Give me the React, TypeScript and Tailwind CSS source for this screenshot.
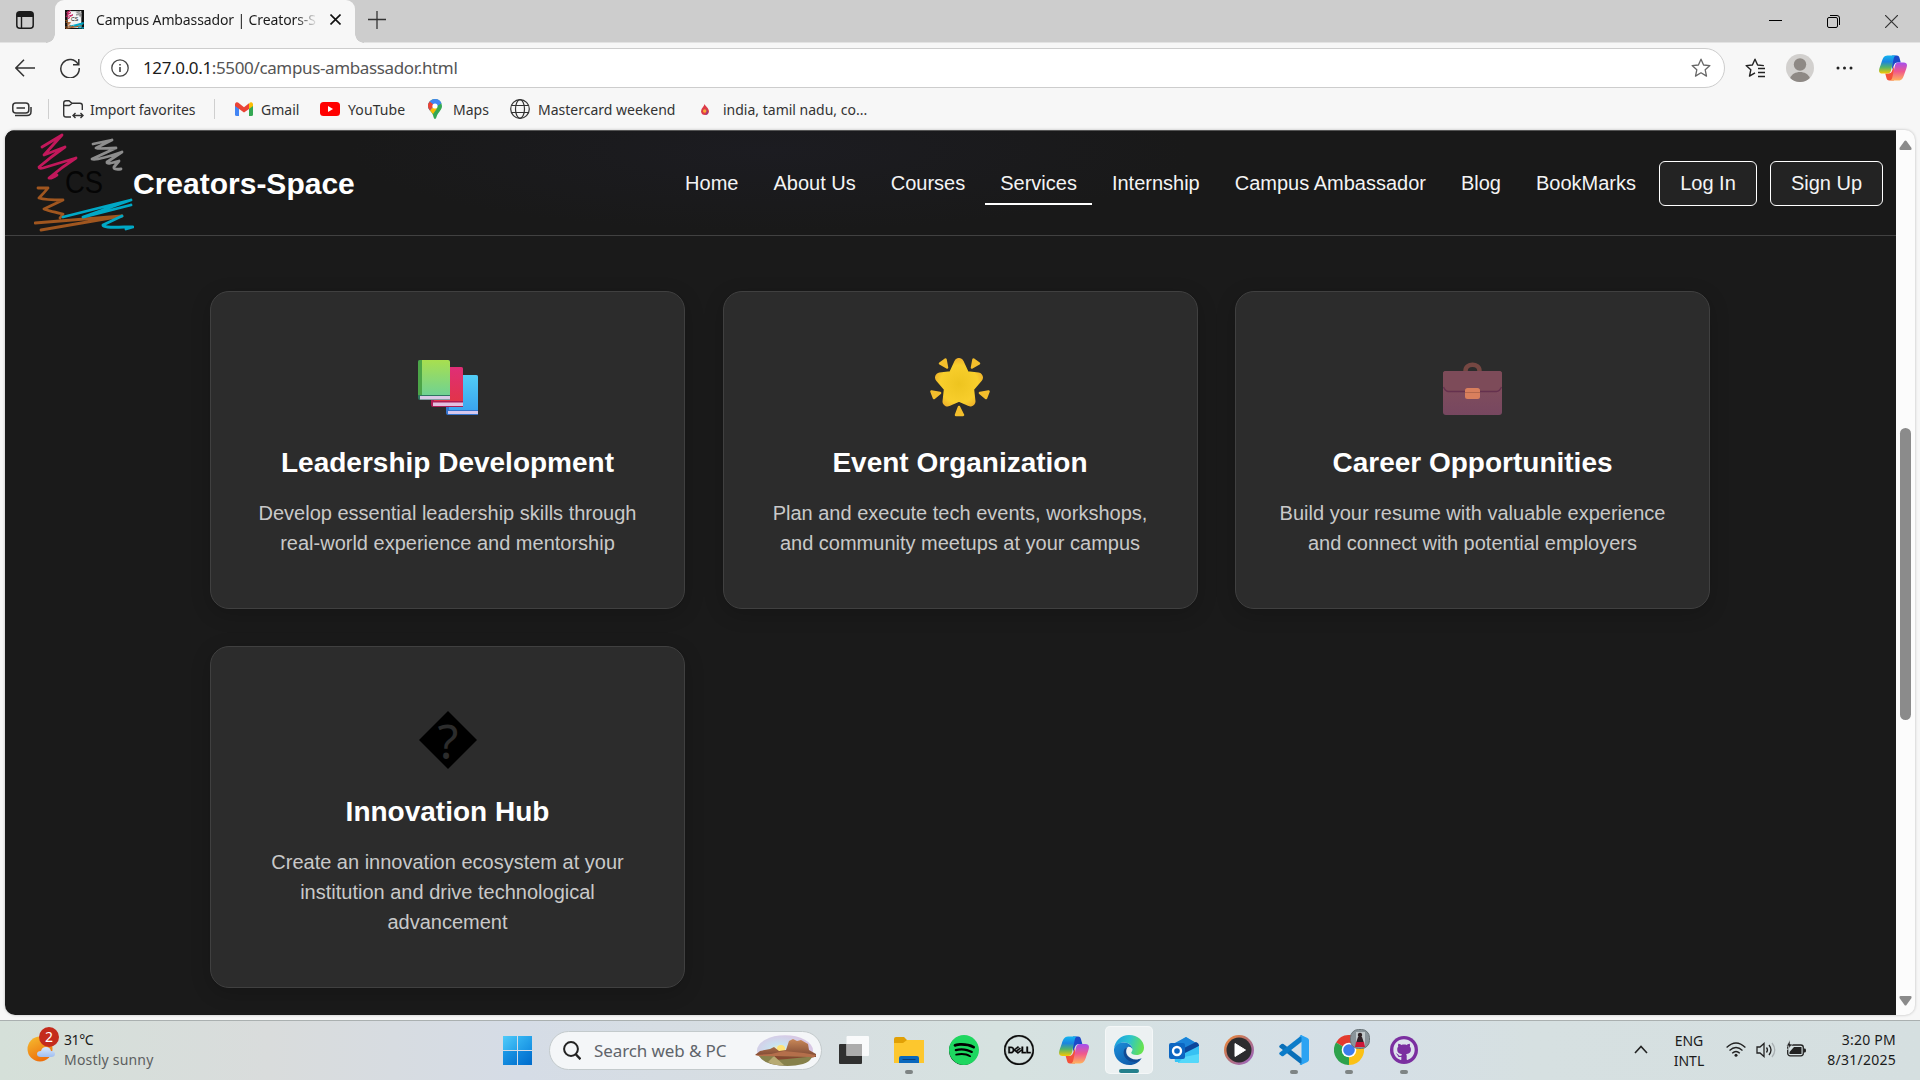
import React from "react";
import { SiDell, SiSpotify } from "react-icons/si";
import { FaGithub } from "react-icons/fa";

const ui = "font-['Noto_Sans','Open_Sans',sans-serif]";

function CopilotIcon({ size }: { size: number }) {
  return (
    <svg width={size} height={size} viewBox="0 0 30 30">
      <defs>
        <linearGradient id="cpA" x1="0" y1="0" x2="0" y2="1">
          <stop offset="0" stopColor="#12b5f0" />
          <stop offset=".35" stopColor="#1b84e0" />
          <stop offset=".65" stopColor="#53b36b" />
          <stop offset="1" stopColor="#f8c800" />
        </linearGradient>
        <linearGradient id="cpB" x1="0" y1="0" x2="0" y2="1">
          <stop offset="0" stopColor="#a34ff0" />
          <stop offset=".5" stopColor="#f0588c" />
          <stop offset="1" stopColor="#ffb45c" />
        </linearGradient>
      </defs>
      <path d="M14 1.500h5c2 0 2.600 1.200 3 2.700l1.300 4.800H20c-2.500 0-3.500 1.300-4.200 3.500L14 17z" fill="#1c49c9" />
      <path d="M16 28.500h-5c-2 0-2.600-1.200-3-2.700L6.700 21H10c2.500 0 3.500-1.300 4.200-3.500L16 13z" fill="#f4513a" />
      <path d="M17.500 1.500H9C5.500 1.500 4 4.500 2.800 8.500S0 15.500 0 18c0 2 1.500 3 3.500 3H9c2.200 0 3.200-1.200 4-3.500L15.700 5c.5-2 1-3.500 3-3.500z" fill="url(#cpA)" />
      <path d="M12.500 28.500H21c3.500 0 5-3 6.200-7S30 14.500 30 12c0-2-1.500-3-3.500-3H21c-2.200 0-3.200 1.200-4 3.500L14.300 25c-.5 2-1 3.500-3 3.500z" fill="url(#cpB)" />
    </svg>
  );
}

function Scribble({ dark = false, size }: { dark?: boolean; size: number }) {
  return (
    <svg width={size} height={size} viewBox="0 0 100 100" fill="none" strokeLinecap="round" strokeLinejoin="round">
      {dark && <rect width="100" height="100" fill="#111" />}
      {dark && <path d="M14 6h72v88H14z" fill="#f3f3f3" />}
      <g strokeWidth={dark ? 5 : 2.800}>
        <path d="M8 14 28 2Q20 11 10 22L31 14Q18 23 5 34q0 2 4 1L42 25Q28 34 15 45q2 1 8-3" stroke="#c2185b" />
        <path d="M59 11 78 7 62 15Q63 16 82 15L58 26Q62 28 88 19L73 29q-1 3 12-1L80 34q-1 3 7 2" stroke="#8d8d8d" />
        <path d="M4 55H14Q10 60 5 65q6 2 24 2L10 76q1 1 19 5l-3 4M1 90 88 83 7 97" stroke="#a0561f" />
        <path d="M29 84 97 67 49 84 97 72 50 84M88 83 69 92q-1 3 21 2h9l-7 2" stroke="#00a8c6" />
      </g>
      <text x="31" y="60" fontFamily="Liberation Sans" fontSize="32" textLength="38" lengthAdjust="spacingAndGlyphs" fill="#050505" stroke="none">CS</text>
    </svg>
  );
}

function Chrome() {
  return (
    <div className="relative size-[30px]">
      <svg width="30" height="30" viewBox="0 0 30 30">
        <path d="M15 15 2 7.500A15 15 0 0 1 28 7.500z" fill="#e33b2e" />
        <path d="M15 15 28 7.500A15 15 0 0 1 15 30z" fill="#fbc116" />
        <path d="M15 15v15A15 15 0 0 1 2 7.500z" fill="#2da24c" />
        <path d="m15 8h13l.6 3L22 17 14.500 30 21 18z" fill="#fbc116" />
        <path d="M2 7.500 8.900 18.500 15 22l-1.500 8z" fill="#2da24c" />
        <circle cx="15" cy="15" r="7.300" fill="#fff" />
        <circle cx="15" cy="15" r="5.800" fill="#3b7ded" />
      </svg>
      <svg className="absolute -top-[6px] left-[16px]" width="20" height="20" viewBox="0 0 20 20">
        <rect x=".5" y=".5" width="19" height="19" rx="8" fill="#89949a" stroke="#6a7478" />
        <path d="M6 3h9v15H6z" fill="#c0c8cb" />
        <circle cx="10" cy="6" r="2.200" fill="#2c2023" />
        <path d="M8 8h4l2 6H6z" fill="#302228" />
        <path d="M6 13h8l1 5H5z" fill="#cb1738" />
      </svg>
    </div>
  );
}

function Edge() {
  return (
    <svg width="30" height="30" viewBox="0 0 30 30">
      <defs>
        <linearGradient id="eg1" x1="0" y1=".2" x2="1" y2=".4">
          <stop offset="0" stopColor="#199ce0" />
          <stop offset=".5" stopColor="#2bc3cf" />
          <stop offset="1" stopColor="#67e34f" />
        </linearGradient>
        <linearGradient id="eg2" x1="0" y1="0" x2="1" y2="1">
          <stop offset="0" stopColor="#1b8fdb" />
          <stop offset="1" stopColor="#0c4f9e" />
        </linearGradient>
      </defs>
      <path d="M0 14C.6 6 7 0 15 0c9 0 15 6 15 12.500 0 5-3.500 7.500-7.500 7.500-3.500 0-5.300-1.200-5.300-2.200 0-.8 1.300-1.300 1.300-3.500 0-3.600-3.500-6.800-8.500-6.800C5 7.500 1.500 10 0 14z" fill="url(#eg1)" />
      <path d="M0 14C1.500 9.500 5 7.500 9.500 7.500c5.500 0 9 3.500 9 6.800-1-2-3-2.800-4.700-2.300C11 13 10 16 11 19.500c1.500 4.500 6 6.500 10.500 6 2.500-.3 4.500-1.300 6-2.300C25 27.500 20.500 30 15.500 30 7 30-.5 23.500 0 14z" fill="url(#eg2)" />
      <path d="M13.800 12C10 13 9 16.500 10 20c1.500 5 7 8 13 6.700l5-3.700c-6 3-12 1-14.500-2.500-2-3-1.500-6.500.3-8.500z" fill="#104b94" />
    </svg>
  );
}

function Vscode() {
  return (
    <svg width="30" height="30" viewBox="0 0 30 30">
      <path d="M.7 10.500 2.500 9q1-.7 2 0L23 23.500V30L.7 12.500q-1-1 0-2z" fill="#0a6fb8" />
      <path d="M.7 19.500 2.500 21q1 .7 2 0L23 6.500V0L.7 17.500q-1 1 0 2z" fill="#0b7cc9" />
      <path d="m22 0 6.500 3Q30 3.700 30 5.300v19.400q0 1.600-1.500 2.300L22 30q-1 0-1.500-1 1.500.3 2-1V2.500q-.5-1.500-2-1Q21 0 22 0z" fill="#2ba3f3" />
    </svg>
  );
}

function Outlook() {
  return (
    <svg width="30" height="28" viewBox="0 0 30 28">
      <path d="M4 9 17 1l13 8v17H6z" fill="#38c5f5" />
      <path d="M4 8 17 1l12 7-14 9z" fill="#1b83d8" />
      <path d="M13 13 27 6q3 1 3 4L14 21z" fill="#0b469b" />
      <path d="m14 18 16-8v15q0 2-2 2H9z" fill="#36c1f3" />
      <path d="m9 27 6-6 15-3v7q0 2-2 2z" fill="#54d8fa" />
      <rect y="7" width="16" height="16" rx="2" fill="#0c66c2" />
      <circle cx="8" cy="15" r="4" fill="none" stroke="#fff" strokeWidth="2.400" />
    </svg>
  );
}

function TaskCell({ children, dot, active }: { children: React.ReactNode; dot?: boolean; active?: boolean }) {
  return (
    <div className="flex w-[55px] justify-center pt-[5px]">
      <div className={active ? "relative flex h-12 w-12 items-center justify-center rounded-[5px] border border-white/40 bg-white/55" : "relative flex h-12 w-12 items-center justify-center"}>
        {children}
        {dot && <span className="absolute bottom-0 left-5 h-1 w-2 rounded-full bg-[#7e8484]" />}
        {active && <span className="absolute bottom-0 left-[13px] h-1 w-5 rounded-full bg-[#24808c]" />}
      </div>
    </div>
  );
}

function Books() {
  return (
    <svg width="60" height="56" viewBox="0 0 60 56">
      <defs>
        <linearGradient id="bkG" x1="0" y1="0" x2="0" y2="1"><stop stopColor="#a8df4f" /><stop offset="1" stopColor="#70d292" /></linearGradient>
        <linearGradient id="bkR" x1="0" y1="0" x2="0" y2="1"><stop stopColor="#df2e77" /><stop offset="1" stopColor="#e23449" /></linearGradient>
        <linearGradient id="bkB" x1="0" y1="0" x2="0" y2="1"><stop stopColor="#52cdf5" /><stop offset="1" stopColor="#3aa5f0" /></linearGradient>
      </defs>
      <path d="M28 17q0-2 2-2h28q2 0 2 2v38H30q-2 0-2-2z" fill="#3474cd" />
      <path d="M31 15h27q2 0 2 2v33H31z" fill="url(#bkB)" />
      <path d="M30 51h30v3H30z" fill="#d5c8ef" />
      <path d="M13 10q0-3 3-3h27q2 0 2 2v38H15q-2 0-2-2z" fill="#ac1d54" />
      <path d="M16 7h27q2 0 2 2v32H16z" fill="url(#bkR)" />
      <path d="M15 42.500h30V46H15z" fill="#e3bfdf" />
      <path d="M0 2q0-2 2-2h28q2 0 2 2v38H2q-2 0-2-2z" fill="#2e7560" />
      <path d="M0 2q0-2 2-2h3v35H0z" fill="#4ca548" />
      <path d="M4 0h26q2 0 2 2v33H4z" fill="url(#bkG)" />
      <path d="M2 36h30v3.500H2z" fill="#d9c9e5" />
    </svg>
  );
}

function GlowStar() {
  return (
    <svg width="60" height="59" viewBox="0 0 60 59" strokeLinejoin="round">
      <defs>
        <radialGradient id="st" gradientUnits="userSpaceOnUse" cx="29" cy="26" r="27"><stop stopColor="#eec41f" /><stop offset=".7" stopColor="#f8ce2c" /><stop offset="1" stopColor="#ecab2a" /></radialGradient>
      </defs>
      <path d="m29 5 6 13 13 1.500-9 10.500 1.500 13.500L29 38.500l-11.500 5L19 30l-9-10.500L23 18z" fill="url(#st)" stroke="url(#st)" strokeWidth="10" />
      <g fill="#f3be2c" stroke="#f3be2c" strokeWidth="2.500">
        <path d="m10 5.500 5.500-4 1.500 8zM49 5.500l-5.500-4-1.500 8zM1.500 33.500 10 35l-6 5zM58.500 33.500 50 35l6 5zM26 57l3-8 4 8z" />
      </g>
    </svg>
  );
}

function Briefcase() {
  return (
    <svg width="60" height="53" viewBox="0 0 60 53">
      <defs>
        <linearGradient id="bf" x1="0" y1="0" x2="0" y2="1"><stop stopColor="#84505a" /><stop offset="1" stopColor="#774760" /></linearGradient>
      </defs>
      <path d="M22.500 9c0-8.500 14-8.500 14 0" fill="none" stroke="#754742" strokeWidth="4.500" />
      <rect x="0" y="9" width="59" height="44" rx="3" fill="url(#bf)" />
      <path d="M0 12q0-3 3-3h53q3 0 3 3v13q-2 4-5 4H5q-3 0-5-4z" fill="#7d4b59" />
      <path d="M.5 25q2 4.500 5 4.500h48q3 0 5-4.500" fill="none" stroke="#65314e" strokeWidth="1.300" />
      <rect x="22" y="26" width="15" height="11" rx="2.500" fill="#d97f5d" />
      <path d="M22 30.500h15" stroke="#b5674c" />
    </svg>
  );
}

function Unknown() {
  return (
    <div className="relative size-[58px]">
      <svg width="58" height="58" viewBox="0 0 58 58">
        <path d="M29 0 58 29 29 58 0 29z" fill="#000" />
      </svg>
      <span className="absolute -top-[4px] left-0 w-[59px] text-center font-['Noto_Sans'] text-[48px] leading-[68px] text-[#2c2c2c]">?</span>
    </div>
  );
}

type CardProps = { icon: React.ReactNode; title: string; lines: string[]; iconBox: string };

function Card({ icon, title, lines, iconBox }: CardProps) {
  return (
    <article className="flex flex-col items-center rounded-[19px] border border-[#404040] bg-[#2c2c2c] py-[50px] shadow-[0_5px_20px_rgba(0,0,0,0.18)]">
      <div className={iconBox}>{icon}</div>
      <h3 className="text-[28px] leading-8 font-bold text-white">{title}</h3>
      <p className="mt-[19px] text-center text-[20px] leading-[30px] text-[#c9c9c9]">
        {lines.map((l) => (
          <span key={l} className="block whitespace-nowrap">{l}</span>
        ))}
      </p>
    </article>
  );
}

const navItems = ["Home", "About Us", "Courses", "Services", "Internship", "Campus Ambassador", "Blog", "BookMarks"];

function TitleBar() {
  return (
    <div className="flex h-[43px] border-b border-[#e3e3e3] bg-[#cdcdcd]">
      <div className="flex w-[55px] justify-center rounded-br-[10px] pt-[11px] pr-[5px]">
        <svg width="18" height="18" viewBox="0 0 18 18">
          <rect x=".8" y=".8" width="16.400" height="16.400" rx="3" fill="none" stroke="#1b1b1b" strokeWidth="1.500" />
          <path d="M1 3q0-2 2-2h12q2 0 2 2v3H1z" fill="#1b1b1b" />
          <path d="M5.500 5v12" stroke="#1b1b1b" strokeWidth="1.400" />
        </svg>
      </div>
      <div className="relative flex h-[43px] w-[300px] items-center rounded-t-[9px] bg-[#f7f7f7] pr-[14px] pb-[4px] pl-[10px]">
        <span className="absolute bottom-0 -left-[9px] size-[9px] bg-[radial-gradient(circle_at_0_0,#cdcdcd_8.5px,#f7f7f7_9px)]" />
        <span className="absolute -right-[9px] bottom-0 size-[9px] bg-[radial-gradient(circle_at_100%_0,#cdcdcd_8.5px,#f7f7f7_9px)]" />
        <Scribble dark size={19} />
        <span className="ml-3 w-[222px] bg-linear-to-r from-[#1b1b1b] from-90% to-transparent bg-clip-text text-[14px] tracking-[-0.12px] whitespace-nowrap text-transparent">
          Campus Ambassador | Creators-S
        </span>
        <svg className="ml-auto shrink-0" width="11" height="11" viewBox="0 0 11 11"><path d="m.5.5 10 10M10.500.5l-10 10" stroke="#111" strokeWidth="1.600" /></svg>
      </div>
      <svg className="mt-[11px] ml-[13px]" width="18" height="18" viewBox="0 0 18 18"><path d="M9 0v18M0 8.500h18" stroke="#333" strokeWidth="1.300" /></svg>
      <div className="ml-auto flex gap-[45px] pt-[15px] pr-[22px]">
        <svg width="13" height="13" viewBox="0 0 13 13"><path d="M0 5.500h13" stroke="#000" /></svg>
        <svg width="13" height="13" viewBox="0 0 13 13" fill="none" stroke="#000"><rect x=".5" y="2.500" width="10" height="10" rx="1.500" /><path d="M3 .5h7q2.500 0 2.500 2.500v7" /></svg>
        <svg width="13" height="13" viewBox="0 0 13 13"><path d="m0 0 13 13M13 0 0 13" stroke="#333" strokeWidth="1.200" /></svg>
      </div>
    </div>
  );
}

const starPath = "M10 1.200 12.600 7l6.300.6-4.700 4.200 1.300 6.300-5.500-3.300-5.500 3.300 1.300-6.300L1.100 7.600 7.400 7z";

function Toolbar() {
  return (
    <div className="flex h-12 items-center pt-[2px]">
      <svg className="ml-[15px]" width="20" height="18" viewBox="0 0 20 18" fill="none" stroke="#333" strokeWidth="1.500"><path d="M9 .7.900 9 9 17.300M1 9h19" /></svg>
      <svg className="ml-[25px]" width="20" height="20" viewBox="0 0 20 20" fill="none" stroke="#333" strokeWidth="1.500"><path d="M18.200 6.500A9.200 9.200 0 1 0 19.200 10M18.800 1v5.800H13" /></svg>
      <div className="ml-5 flex h-10 w-[1625px] items-center rounded-full border border-[#cdcdcd] bg-white pr-[13px] pl-[10px]">
        <svg width="18" height="18" viewBox="0 0 18 18" fill="none" stroke="#444" strokeWidth="1.300"><circle cx="9" cy="9" r="8.200" /><path d="M9 8v5M9 5v1.500" strokeWidth="1.600" /></svg>
        <span className="ml-[14px] text-[17px] tracking-[-0.36px] text-[#555]"><span className="text-[#1b1b1b]">127.0.0.1</span>:5500/campus-ambassador.html</span>
        <svg className="ml-auto" width="20" height="20" viewBox="0 0 20 20" fill="none" stroke="#666" strokeWidth="1.300" strokeLinejoin="round"><path d={starPath} /></svg>
      </div>
      <svg className="ml-5" width="20" height="20" viewBox="0 0 20 20" fill="none" stroke="#222" strokeWidth="1.400" strokeLinejoin="round"><path d="m10 14.800-5.500 3.300 1.300-6.300L1.100 7.600 7.400 7 10 1.200 12.600 7l6.300.6" /><path d="M13 10.500h7M13 14.500h7M13 18.500h7" strokeWidth="1.500" /></svg>
      <svg className="ml-[21px]" width="28" height="28" viewBox="0 0 28 28"><circle cx="14" cy="14" r="14" fill="#d2d0ce" /><circle cx="14" cy="10.500" r="6.200" fill="#8e8985" /><path d="M4.200 24C7 16 21 16 23.800 24A14 14 0 0 1 4.200 24z" fill="#8e8985" /></svg>
      <svg className="ml-[22px]" width="18" height="4" viewBox="0 0 18 4" fill="#222"><circle cx="2" cy="2" r="1.500" /><circle cx="8.500" cy="2" r="1.500" /><circle cx="15" cy="2" r="1.500" /></svg>
      <div className="ml-[25px]"><CopilotIcon size={28} /></div>
    </div>
  );
}

function Favorites() {
  return (
    <div className="flex h-[39px] items-center pb-[3px] text-[14px] text-[#333]">
      <svg className="ml-3" width="20" height="15" viewBox="0 0 20 15" fill="none" stroke="#333" strokeWidth="1.500"><rect x=".8" y="1" width="16" height="10" rx="3" /><path d="M4.500 6h8.500M3 13.500h12q4 0 4-4V5" /></svg>
      <span className="ml-4 h-5 w-px bg-[#cfcfcf]" />
      <svg className="ml-[14px]" width="21" height="19" viewBox="0 0 21 19" fill="none" stroke="#333" strokeWidth="1.400"><path d="M8 17H3q-2.300 0-2.300-2.300V3Q.7.700 3 .7h3l3 2.600h8q2.300 0 2.300 2.300V10M.7 5.500h5.500l3-2.200M10 15.500h10M12.500 13 10 15.500l2.500 2.500M17.500 13l2.500 2.500-2.500 2.500" /></svg>
      <span className="ml-[6px] w-[106px] tracking-[-0.08px] whitespace-nowrap">Import favorites</span>
      <span className="ml-[18px] h-5 w-px bg-[#cfcfcf]" />
      <svg className="ml-5" width="18" height="14" viewBox="0 0 18 14"><path d="M0 2v10.500Q0 14 1.500 14H4V5z" fill="#4285f4" /><path d="M18 2v10.500q0 1.500-1.500 1.500H14V5z" fill="#34a853" /><path d="M14 1.500Q15 0 16.500.2 18 .5 18 2.500V4l-4 3z" fill="#fbbc04" /><path d="M0 2.500Q0 .5 1.500.2 3 0 4 1.200l5 4 5-4V7L9 10.500 0 4z" fill="#ea4335" /></svg>
      <span className="ml-2 w-[38px]">Gmail</span>
      <svg className="ml-[21px]" width="20" height="14" viewBox="0 0 20 14"><rect width="20" height="14" rx="3.500" fill="#f00" /><path d="m8 4 5 3-5 3z" fill="#fff" /></svg>
      <span className="ml-2 w-[58px] tracking-[0.1px]">YouTube</span>
      <svg className="ml-[22px]" width="14" height="20" viewBox="0 0 14 20"><path d="M7 0a7 7 0 0 1 7 7c0 4-4 6-5.500 11q-.5 2-1.500 2t-1.500-2C5 13 0 11 0 7a7 7 0 0 1 7-7z" fill="#34a853" /><path d="M7 0a7 7 0 0 1 6.500 4.300L2 11.500C.5 10 0 8 0 7a7 7 0 0 1 7-7z" fill="#4285f4" /><path d="M1.600 2.500 6 6l-4 5.500C.5 10 0 8 0 7q0-2.600 1.600-4.500z" fill="#ea4335" /><path d="m2 11.500 3.500-4 3.500 2L5 15z" fill="#fbbc04" /><circle cx="7" cy="7" r="2.600" fill="#fff" /></svg>
      <span className="ml-[11px] w-[37px]">Maps</span>
      <svg className="ml-5" width="20" height="20" viewBox="0 0 20 20" fill="none" stroke="#333" strokeWidth="1.200"><circle cx="10" cy="10" r="9.300" /><ellipse cx="10" cy="10" rx="4.500" ry="9.300" /><path d="M1.500 6.500h17M1.500 13.500h17" /></svg>
      <span className="ml-2 w-[138px] whitespace-nowrap">Mastercard weekend</span>
      <svg className="ml-[25px]" width="8" height="11" viewBox="0 0 8 11"><path d="M3.500 0C4 2 8 4 8 7.500Q7.500 11 4 11T0 7.500Q0 5 2 3q1-1 1.500-3z" fill="#dd3b48" /><path d="M5 5q3 3 1 5.500L4 11q3-2 1-6z" fill="#7c3c9c" /><circle cx="3.700" cy="7" r="1.700" fill="#f8ab35" /></svg>
      <span className="ml-[14px] whitespace-nowrap">india, tamil nadu, co...</span>
    </div>
  );
}

function SiteHeader() {
  return (
    <header className="flex h-[105px] items-center border-b border-[#414141] bg-[#191919] bg-[radial-gradient(ellipse_420px_80px_at_765px_20px,#1c1c21,#191919)] pr-[13px] pb-px pl-[29px]">
      <Scribble size={100} />
      <span className="-ml-px pt-px text-[30px] font-bold text-white">Creators-Space</span>
      <nav className="ml-auto flex gap-[5px] text-[20px] text-[#f4f4f4]">
        {navItems.map((n) => (
          <a key={n} className={n === "Services" ? "border-b-2 border-white px-[15px] pt-[11px] pb-[8px] leading-[23px] whitespace-nowrap" : "border-b-2 border-transparent px-[15px] pt-[11px] pb-[8px] leading-[23px] whitespace-nowrap"}>{n}</a>
        ))}
      </nav>
      <button className="mt-px ml-2 h-[45px] w-[98px] rounded-[6px] border border-white bg-[#232323] text-[20px] text-[#f4f4f4]">Log In</button>
      <button className="mt-px ml-[13px] h-[45px] w-[113px] rounded-[6px] border border-white bg-[#232323] text-[20px] text-[#f4f4f4]">Sign Up</button>
    </header>
  );
}

function Page() {
  return (
    <div className="mx-[5px] flex h-[885px] w-[1910px] overflow-hidden rounded-[10px] bg-[#fcfcfc] shadow-[0_0_3px_rgba(0,0,0,0.25)]">
      <main className="w-[1891px] border-t border-[#555] bg-[#1a1a1a] font-['Liberation_Sans',Arial,sans-serif]">
        <SiteHeader />
        <section className="ml-[205px] grid w-[1500px] grid-cols-3 gap-x-[37.5px] gap-y-[37px] pt-[55px]">
          <Card icon={<Books />} iconBox="flex h-[105px] items-start pt-[18px]" title="Leadership Development" lines={["Develop essential leadership skills through", "real-world experience and mentorship"]} />
          <Card icon={<GlowStar />} iconBox="flex h-[105px] items-start pt-4" title="Event Organization" lines={["Plan and execute tech events, workshops,", "and community meetups at your campus"]} />
          <Card icon={<Briefcase />} iconBox="flex h-[105px] items-start pt-[20px]" title="Career Opportunities" lines={["Build your resume with valuable experience", "and connect with potential employers"]} />
          <Card icon={<Unknown />} iconBox="flex h-[99px] items-start pt-[14px]" title="Innovation Hub" lines={["Create an innovation ecosystem at your", "institution and drive technological", "advancement"]} />
        </section>
      </main>
      <div className="flex w-[19px] flex-col items-center pt-[10px] pb-[9px]">
        <svg width="13" height="10" viewBox="0 0 13 10"><path d="M5.500 1q1-1 2 0L12.500 8q.5 2-1 2h-10Q0 10 .5 8z" fill="#8b8b8b" /></svg>
        <span className="mt-[278px] h-[292px] w-[11px] rounded-full bg-[#8b8b8b]" />
        <svg className="mt-auto" width="13" height="10" viewBox="0 0 13 10"><path d="M5.500 9q1 1 2 0L12.500 2q.5-2-1-2h-10Q0 0 .5 2z" fill="#8b8b8b" /></svg>
      </div>
    </div>
  );
}

function Taskbar() {
  return (
    <footer className="flex h-[60px] border-t border-[#aab0b0] bg-[linear-gradient(90deg,#d5e0d9_0%,#d9dcdc_14%,#d5dce6_27%,#d7dee1_42%,#d6e2e0_52%,#d5dfe7_70%,#d6e0e1_80%,#d5dfe0_100%)]">
      <div className="flex w-[490px] pl-[27px]">
        <div className="relative h-10 w-8">
          <svg className="mt-[15px]" width="29" height="26" viewBox="0 0 29 26">
            <defs>
              <linearGradient id="sun" x1="0" y1="0" x2=".5" y2="1"><stop stopColor="#f5be31" /><stop offset="1" stopColor="#ee6f0c" /></linearGradient>
              <linearGradient id="cloud" x1="0" y1="0" x2="0" y2="1"><stop stopColor="#d9e9fc" /><stop offset="1" stopColor="#a0bef0" /></linearGradient>
            </defs>
            <circle cx="13" cy="13" r="12.500" fill="url(#sun)" />
            <path d="M14 21q-4 0-4-3t4-3q1-4 5-4t5 4q4 0 4 3t-4 3z" fill="url(#cloud)" />
          </svg>
          <span className="absolute top-[6px] left-[12px] flex size-5 items-center justify-center rounded-full bg-[#c42b1c] text-[14px] leading-none text-white">2</span>
        </div>
        <div className="pt-[9px] pl-[5px] text-[14px] leading-5 text-[#1b1b1b]">
          <div className="tracking-[-0.4px]">31°C</div>
          <div className="tracking-[0.2px] text-[#5c6060]">Mostly sunny</div>
        </div>
      </div>
      <div className="flex w-[55px] justify-center pt-[15px]">
        <div className="grid size-[29px] grid-cols-2 gap-px">
          <span className="bg-linear-to-br from-[#4fcbfa] to-[#25a3ea]" />
          <span className="bg-linear-to-br from-[#35b5f2] to-[#1590e2]" />
          <span className="bg-linear-to-br from-[#1d9be8] to-[#0777d2]" />
          <span className="bg-linear-to-br from-[#128ae0] to-[#016bcb]" />
        </div>
      </div>
      <div className="mt-[10px] ml-1 flex h-[39px] w-[273px] items-center rounded-full border border-[#c3cacc] bg-[#f4f6f8] pr-1 pl-[13px]">
        <svg width="18" height="19" viewBox="0 0 18 19" fill="none" stroke="#222" strokeWidth="2"><circle cx="8" cy="8" r="6.900" /><path d="m12.500 13 5 5.200" strokeWidth="2.500" /></svg>
        <span className="ml-[13px] text-[17px] tracking-[-0.1px] whitespace-nowrap text-[#60646a]">Search web &amp; PC</span>
        <svg className="ml-auto" width="62" height="31" viewBox="0 0 62 31">
          <defs>
            <radialGradient id="sky" cx=".4" cy=".45"><stop stopColor="#fdf1a8" /><stop offset=".3" stopColor="#c9e3f1" /><stop offset="1" stopColor="#d8c7e4" /></radialGradient>
            <linearGradient id="rock" x1="0" y1="0" x2="0" y2="1"><stop stopColor="#c98858" /><stop offset="1" stopColor="#7b4632" /></linearGradient>
          </defs>
          <ellipse cx="30" cy="15.500" rx="28" ry="15.300" fill="url(#sky)" />
          <circle cx="26" cy="14" r="4" fill="#fee377" />
          <path d="M0 20 5 16 15 14 19 12l5 4 7-1 3-9 4-2 4 2 4-1 7 4 1 6 7 4v3z" fill="url(#rock)" />
          <path d="m0 20 16-1 13-3 20 2 12 2q-1 3-6 3L7 22z" fill="#b46f4b" />
          <path d="m4 21 53 1q-2 5-9 7-15 4-32 0Q8 27 4 21z" fill="#87814b" />
          <path d="m18 21 34 1-20 2-12 1z" fill="#85472f" />
          <path d="m19 21-6 6q7 4 16 3z" fill="#b7aa73" />
        </svg>
      </div>
      <div className="ml-1 flex">
        <TaskCell>
          <svg width="30" height="28" viewBox="0 0 30 28"><rect y="8" width="23" height="20" rx="1" fill="#303030" /><rect x="7.500" y="0" width="22.500" height="20" rx="1" fill="#fff" fillOpacity=".85" /><path d="M7.500 8H23v12H7.500z" fill="#acacac" /></svg>
        </TaskCell>
        <TaskCell dot>
          <svg width="30" height="27" viewBox="0 0 30 27"><path d="M0 2Q0 0 2 0h8l3 3h17v6H0z" fill="#e1a006" /><path d="M0 6h9l4-3h17v23H0z" fill="#fdc72e" /><path d="M5 26v-5q0-2 2-2h16q2 0 2 2v5z" fill="#0a68bd" /><path d="M8.500 22.500h13" stroke="#0a3e78" /></svg>
        </TaskCell>
        <TaskCell><div className="flex size-[29px] items-center justify-center rounded-full bg-black"><SiSpotify size={30} color="#1ed760" className="shrink-0" /></div></TaskCell>
        <TaskCell><SiDell size={30} color="#080808" stroke="#080808" strokeWidth={0.3} /></TaskCell>
        <TaskCell><CopilotIcon size={30} /></TaskCell>
        <TaskCell active><Edge /></TaskCell>
        <TaskCell><Outlook /></TaskCell>
        <TaskCell>
          <svg width="30" height="30" viewBox="0 0 30 30">
            <defs><linearGradient id="mp" x1="0" y1="0" x2="1" y2="1"><stop stopColor="#f78c32" /><stop offset=".45" stopColor="#b7706e" /><stop offset="1" stopColor="#9a67d0" /></linearGradient></defs>
            <circle cx="15" cy="15" r="15" fill="url(#mp)" /><circle cx="15" cy="15" r="12.500" fill="#2c2c2e" /><path d="m11 8.500 10.500 6.500L11 21.500z" fill="#fff" stroke="#fff" strokeLinejoin="round" />
          </svg>
        </TaskCell>
        <TaskCell dot><Vscode /></TaskCell>
        <TaskCell dot><Chrome /></TaskCell>
        <TaskCell dot><div className="flex size-[28px] items-center justify-center rounded-full bg-[#7b2fa0]"><FaGithub size={22} color="#dde3ec" /></div></TaskCell>
      </div>
      <div className="ml-auto flex pr-6 text-[14px] leading-5 text-[#1b1b1b]">
        <svg className="mt-6 mr-[25px]" width="14" height="9" viewBox="0 0 14 9"><path d="m1 8 6-6.500L13 8" fill="none" stroke="#222" strokeWidth="1.600" /></svg>
        <div className="mr-px w-[32px] pt-[10px] text-center leading-[20px]">
          <div>ENG</div>
          <div>INTL</div>
        </div>
        <svg className="mt-[21px] ml-5" width="20" height="15" viewBox="0 0 20 15" fill="none" stroke="#222" strokeWidth="1.300"><path d="M.6 5.500q9.400-9 18.800 0M3.500 8.500q6.500-6 13 0M6.200 11.300q3.800-3.500 7.600 0" /><circle cx="10" cy="13.300" r="1.500" fill="#222" stroke="none" /></svg>
        <svg className="mt-[21px] ml-[10px]" width="20" height="16" viewBox="0 0 20 16" fill="none" stroke="#222" strokeWidth="1.300"><path d="M1 5h3l4-3.500v13L4 11H1zM10.500 5.500q2 2.500 0 5M13 3q4 5 0 10" /><path d="M16 1q5.500 7 0 14" stroke="#aab0b3" /></svg>
        <svg className="mt-[19px] ml-[10px]" width="20" height="17" viewBox="0 0 20 17"><rect x="1.700" y="5" width="15.600" height="10.800" rx="2.500" fill="none" stroke="#222" strokeWidth="1.300" /><path d="M3.500 12 8 7h7.500v7h-12zM18 8.500h1q1 0 1 2t-1 2h-1z" fill="#222" /><path d="M4 0 .5 6H3L1.500 10 6.500 4H4z" fill="#222" stroke="#d7e0e2" strokeWidth=".6" /></svg>
        <div className="w-[90px] pt-[9px] text-right tracking-[0.25px]">
          <div>3:20 PM</div>
          <div>8/31/2025</div>
        </div>
      </div>
    </footer>
  );
}

export default function App() {
  return (
    <div className={`flex h-[1080px] w-[1920px] flex-col overflow-hidden bg-[#f7f7f7] ${ui}`}>
      <TitleBar />
      <Toolbar />
      <Favorites />
      <Page />
      <div className="h-[5px]" />
      <Taskbar />
    </div>
  );
}
